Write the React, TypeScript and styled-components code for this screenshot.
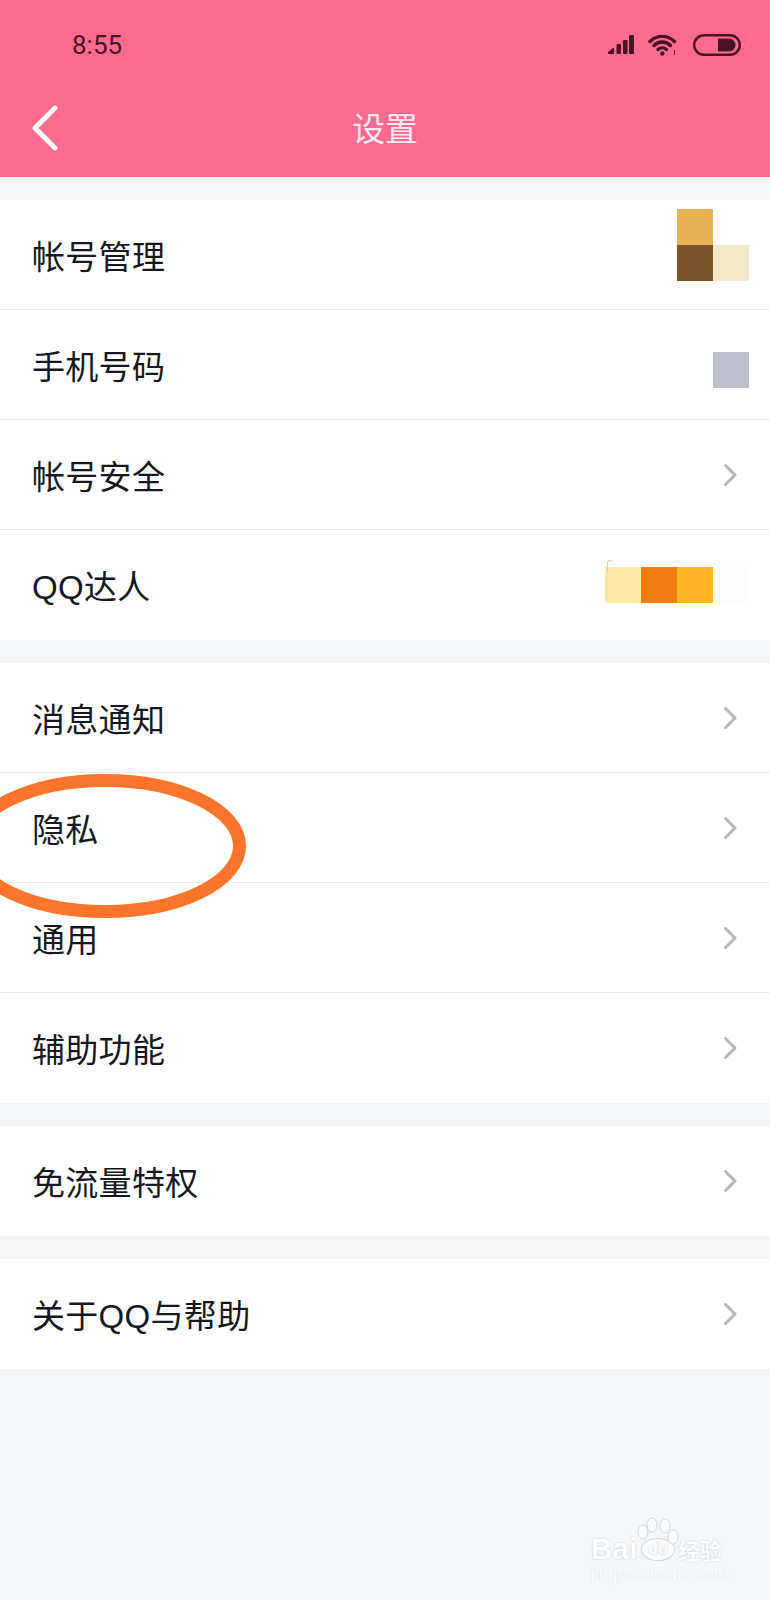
import styled, { createGlobalStyle } from "styled-components";

const GlobalStyle = createGlobalStyle`
  html, body {
    margin: 0;
    padding: 0;
    background: #f3f6f9;
  }
`;

const Page = styled.div`
  position: relative;
  width: 770px;
  height: 1600px;
  overflow: hidden;
  background: #f3f6f9;
  font-family: "Roboto", "Noto Sans CJK SC", sans-serif;
`;

const Header = styled.header`
  height: 177px;
  background: #fd6b91;
  display: flex;
  flex-direction: column;
`;

const StatusBar = styled.div`
  height: 89px;
  padding: 0 29px 0 72px;
  display: flex;
  align-items: center;
  justify-content: space-between;
  color: #4a1326;
`;

const Time = styled.span`
  font-size: 26px;
`;

const StatusIcons = styled.div`
  display: flex;
  align-items: center;
`;

const Signal = styled.svg`
  margin-right: 14px;
`;

const Wifi = styled.svg`
  margin-right: 16px;
`;

const NavBar = styled.div`
  position: relative;
  flex: 1;
  display: flex;
  align-items: center;
  justify-content: center;
  padding-bottom: 12px;
`;

const BackIcon = styled.svg`
  position: absolute;
  left: 29px;
  top: 16px;
`;

const Title = styled.h1`
  margin: 0;
  font-size: 33px;
  font-weight: 400;
  color: #fde8ee;
  font-family: "Noto Sans CJK SC", sans-serif;
`;

const Groups = styled.main`
  padding-top: 23px;
  display: flex;
  flex-direction: column;
  gap: 23px;
`;

const Group = styled.section`
  background: #fff;
`;

const Row = styled.div`
  height: 110px;
  box-sizing: border-box;
  padding: 0 32px;
  display: flex;
  align-items: center;
  justify-content: space-between;
  border-bottom: 1px solid #e9ebee;
  &:last-child {
    border-bottom: 0;
  }
`;

const Label = styled.span`
  font-size: 33px;
  letter-spacing: 0.3px;
  color: #15181f;
  font-family: "Liberation Sans", "Noto Sans CJK SC", sans-serif;
  font-weight: 400;
`;

const Chevron = styled.svg`
  margin-right: 1px;
  flex: none;
`;

const Mosaic = styled.div<{ $shift?: number; $curl?: boolean }>`
  position: relative;
  display: grid;
  grid-template-columns: repeat(4, 36px);
  grid-auto-rows: 36px;
  margin-right: -11px;
  margin-top: ${(p) => p.$shift || 0}px;
  ${(p) =>
    p.$curl &&
    `&::before {
      content: "";
      position: absolute;
      left: 2px;
      top: -7px;
      width: 5px;
      height: 12px;
      border: 1.5px solid #eec79c;
      border-right: 0;
      border-bottom: 0;
      border-radius: 5px 5px 0 0;
    }`}
`;

const Tile = styled.div<{ $color?: string }>`
  background: ${(p) => p.$color || "transparent"};
`;

const Ring = styled.svg`
  position: absolute;
  left: 0;
  top: 770px;
`;

const Watermark = styled.div`
  position: absolute;
  left: 591px;
  top: 1532px;
  width: 150px;
  color: #fbfcfd;
  text-shadow: 0 0 2px #c3c7cd;
`;

const MarkTop = styled.div`
  display: flex;
  align-items: center;
  font-family: "Liberation Sans", sans-serif;
  font-size: 29px;
  font-weight: 700;
  letter-spacing: 0.6px;
  line-height: 34px;
`;

const Palm = styled.span`
  width: 34px;
  height: 23px;
  margin-left: 3px;
  box-sizing: border-box;
  border: 1px solid #d3d7dc;
  border-radius: 50%;
  background: #fbfcfd;
  display: flex;
  align-items: center;
  justify-content: center;
  font-size: 16px;
  letter-spacing: 0;
  line-height: 1;
`;

const MarkCn = styled.span`
  font-family: "Noto Sans CJK SC", sans-serif;
  font-size: 22px;
  letter-spacing: 0.4px;
  margin-left: 3px;
`;

const MarkUrl = styled.div`
  font-family: "Liberation Sans", sans-serif;
  font-size: 17px;
  line-height: 18px;
  white-space: nowrap;
  text-shadow: 0 0 1.5px #d0d4d9;
`;

const Paw = styled.svg`
  position: absolute;
  left: 46px;
  top: -15px;
`;

type Item = { label: string; tiles?: (string | null)[][]; shift?: number; curl?: boolean };

const groups: Item[][] = [
  [
    {
      label: "帐号管理",
      tiles: [
        [null, null, "#e8b356", null],
        [null, null, "#7c552c", "#f3e7c9"],
      ],
      shift: -20,
    },
    { label: "手机号码", tiles: [[null, null, null, "#bdc0cb"]], shift: 11 },
    { label: "帐号安全" },
    { label: "QQ达人", tiles: [["#ffe9a6", "#f47d12", "#feb522", "#fdfdfd"]], curl: true },
  ],
  [{ label: "消息通知" }, { label: "隐私" }, { label: "通用" }, { label: "辅助功能" }],
  [{ label: "免流量特权" }],
  [{ label: "关于QQ与帮助" }],
];

function App() {
  return (
    <Page>
      <GlobalStyle />
      <Header>
        <StatusBar>
          <Time>8:55</Time>
          <StatusIcons>
            <Signal width="26" height="20" viewBox="0 0 26 20" fill="#4a1326">
              <path d="M0 19v-2l5-4h1v6z" />
              <rect x="8.500" y="9" width="4.500" height="10" rx="1" />
              <rect x="15" y="5" width="4.500" height="14" rx="1" />
              <rect x="21" y="0" width="5" height="19" rx="1" />
            </Signal>
            <Wifi width="29" height="22" viewBox="0 0 29 22" fill="none" stroke="#4a1326" strokeWidth="3.400" strokeLinecap="round">
              <path d="M2 7.500c6.500-6.800 18-6.800 24.500 0" />
              <path d="M6 11.500c4.500-4.600 12-4.600 16.500 0" />
              <path d="M10 15.500c2.400-2.200 6-2.200 8.500 0" />
              <circle cx="14.300" cy="19.500" r="2.200" fill="#4a1326" stroke="none" />
              <path d="M26.500 16.500v4" strokeWidth="1" />
            </Wifi>
            <svg width="48" height="22" viewBox="0 0 48 22">
              <rect x="1.200" y="1.200" width="45.600" height="19.600" rx="9.800" fill="none" stroke="#4a1326" strokeWidth="2.400" />
              <path d="M25 4.500h11a6.500 6.500 0 0 1 0 13H25z" fill="#4a1326" />
            </svg>
          </StatusIcons>
        </StatusBar>
        <NavBar>
          <BackIcon width="30" height="46" viewBox="0 0 30 46" fill="none" stroke="#fff" strokeWidth="5" strokeLinecap="round" strokeLinejoin="round">
            <path d="M26 3 6 23l20 20" />
          </BackIcon>
          <Title>设置</Title>
        </NavBar>
      </Header>
      <Groups>
        {groups.map((group) => (
          <Group key={group[0].label}>
            {group.map((item) => (
              <Row key={item.label}>
                <Label>{item.label}</Label>
                {item.tiles ? (
                  <Mosaic $shift={item.shift} $curl={item.curl}>
                    {item.tiles.flat().map((color, i) => (
                      <Tile key={i} $color={color || undefined} />
                    ))}
                  </Mosaic>
                ) : (
                  <Chevron width="14" height="24" viewBox="0 0 14 24" fill="none" stroke="#b4b7bd" strokeWidth="3" strokeLinecap="round" strokeLinejoin="round">
                    <path d="M2.500 2.500 12 12l-9.500 9.500" />
                  </Chevron>
                )}
              </Row>
            ))}
          </Group>
        ))}
      </Groups>
      <Ring width="260" height="160" viewBox="0 0 260 160" fill="none">
        <ellipse cx="105" cy="76" rx="134.500" ry="65.500" stroke="#fb752a" strokeWidth="13" />
      </Ring>
      <Watermark>
        <Paw width="42" height="30" viewBox="0 0 42 30" fill="#fbfcfd" stroke="#d3d7dc">
          <ellipse cx="6" cy="15" rx="5" ry="7" />
          <ellipse cx="15" cy="8" rx="5" ry="7" />
          <ellipse cx="28" cy="9" rx="5" ry="7" />
          <ellipse cx="36" cy="20" rx="5" ry="7" />
        </Paw>
        <MarkTop>
          Bai
          <Palm>du</Palm>
          <MarkCn>经验</MarkCn>
        </MarkTop>
        <MarkUrl>jingyan.baidu.com</MarkUrl>
      </Watermark>
    </Page>
  );
}

export default App;
